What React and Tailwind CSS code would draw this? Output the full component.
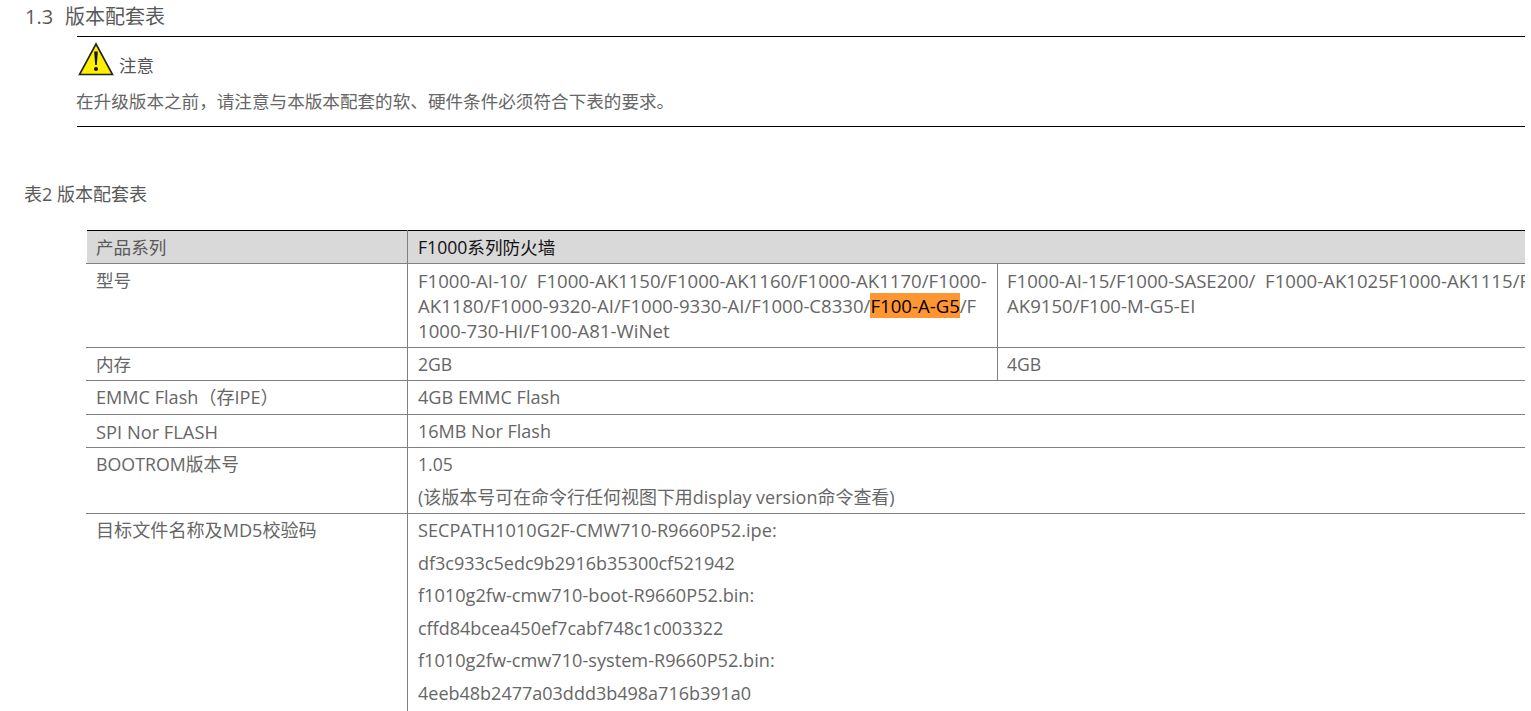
const font = '"Open Sans","Noto Sans CJK SC",sans-serif';
const cell0 = "border border-[#808080] border-l-transparent align-top pl-[9px] pr-2 pt-1 pb-[3px] text-[#666666]";
const cell = "border border-[#808080] align-top pl-[10px] pt-1 pb-[3px] text-[#666666] whitespace-nowrap overflow-hidden";

function Warn() {
  return (
    <svg width="36" height="34" viewBox="0 0 36 34" className="block shrink-0">
      <path d="M18 2 L34.5 32.5 L1.5 32.5 Z" fill="#ffef00" stroke="#222222" strokeWidth="1.6" strokeLinejoin="miter" />
      <path d="M16.2 9.5 L19.8 9.5 L18.8 23 L17.2 23 Z" fill="#111111" />
      <circle cx="18" cy="27" r="2" fill="#111111" />
    </svg>
  );
}

const files = [
  ["SECPATH1010G2F-CMW710-R9660P52.ipe:", "text-[18.15px]"],
  ["df3c933c5edc9b2916b35300cf521942", "text-[18px]"],
  ["f1010g2fw-cmw710-boot-R9660P52.bin:", "text-[18.15px]"],
  ["cffd84bcea450ef7cabf748c1c003322", "text-[18px]"],
  ["f1010g2fw-cmw710-system-R9660P52.bin:", "text-[18.15px]"],
  ["4eeb48b2477a03ddd3b498a716b391a0", "text-[18px]"],
];

export default function App() {
  return (
    <div className="w-[1531px] h-[711px] overflow-hidden bg-white text-[17.6px] leading-[25px] text-[#666666]" style={{ fontFamily: font }}>
      <div className="w-[1525px] overflow-hidden">
        <h2 className="flex h-[36px] items-start pl-[25px] pt-[4px] leading-[26px] text-[20px] font-normal text-[#595959]">
          <span className="w-[40px]">1.3</span>
          <span>版本配套表</span>
        </h2>
        <div className="ml-[77px] border-y border-black h-[91px]">
          <div className="flex items-end gap-[5px] pl-[1px] pt-[4px] h-[39px]">
            <Warn />
            <span className="text-[17.5px] leading-[20px] text-[#555555] mb-[1px]">注意</span>
          </div>
          <p className="mt-[13px] -ml-[1px]">在升级版本之前，请注意与本版本配套的软、硬件条件必须符合下表的要求。</p>
        </div>
        <p className="pl-[24px] mt-[55px] text-[18px] text-[#595959]">表2 版本配套表</p>
        <div className="ml-[86px] mt-[23px]">
          <table className="w-[1501px] table-fixed border-collapse">
            <colgroup>
              <col className="w-[321px]" />
              <col className="w-[590px]" />
              <col className="w-[590px]" />
            </colgroup>
            <tbody>
              <tr className="bg-[#d9d9d9] border-t border-t-black">
                <td className="border-x border-b border-[#808080] border-l-transparent border-t-black align-top pl-[9px] pt-1 pb-[3px] text-[#595959]">产品系列</td>
                <td colSpan={2} className="border-x border-b border-[#808080] border-t-black align-top pl-[10px] pt-1 pb-[3px] text-[#111111]">F1000系列防火墙</td>
              </tr>
              <tr>
                <td className={cell0}>型号</td>
                <td className={`${cell} text-[18.6px] !pb-1`}>
                  F1000-AI-10/&nbsp; F1000-AK1150/F1000-AK1160/F1000-AK1170/F1000-<br />
                  AK1180/F1000-9320-AI/F1000-9330-AI/F1000-C8330/<span className="bg-[#ff9632] text-black">F100-A-G5</span>/F<br />
                  1000-730-HI/F100-A81-WiNet
                </td>
                <td className={`${cell} text-[18.6px] !pl-[9px]`}>
                  F1000-AI-15/F1000-SASE200/&nbsp; F1000-AK1025F1000-AK1115/F1000-AK1125/F1000-<br />
                  AK9150/F100-M-G5-EI
                </td>
              </tr>
              <tr>
                <td className={cell0}>内存</td>
                <td className={cell}>2GB</td>
                <td className={`${cell} !pl-[9px]`}>4GB</td>
              </tr>
              <tr className="h-[34px]">
                <td className={`${cell0} text-[18.1px]`}>EMMC Flash（存IPE）</td>
                <td colSpan={2} className={`${cell} text-[18.1px]`}>4GB EMMC Flash</td>
              </tr>
              <tr>
                <td className={`${cell0} text-[18.3px]`}>SPI Nor FLASH</td>
                <td colSpan={2} className={`${cell} text-[18px]`}>16MB Nor Flash</td>
              </tr>
              <tr>
                <td className={`${cell0} text-[17.8px]`}>BOOTROM版本号</td>
                <td colSpan={2} className={cell}>
                  <p>1.05</p>
                  <p className="mt-2 text-[17.98px]">(该版本号可在命令行任何视图下用display version命令查看)</p>
                </td>
              </tr>
              <tr>
                <td className={`${cell0} text-[18.1px]`}>目标文件名称及MD5校验码</td>
                <td colSpan={2} className={cell}>
                  {files.map(([f, size]) => (
                    <p key={f} className={`h-[32.5px] ${size}`}>{f}</p>
                  ))}
                </td>
              </tr>
            </tbody>
          </table>
        </div>
      </div>
    </div>
  );
}
